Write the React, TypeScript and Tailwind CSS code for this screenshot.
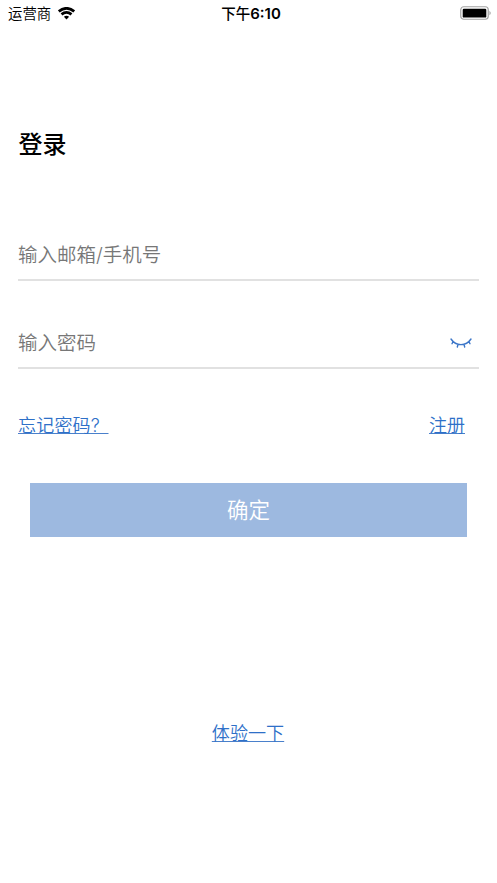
import React from "react";

function StatusBar() {
  return (
    <header className="grid h-[26px] grid-cols-3 items-center pl-2 pr-1.5 text-[14.4px] leading-[26px] text-black">
      <div className="flex items-center gap-[7px]">
        <span className="pt-px font-[350]">运营商</span>
        <svg width="17" height="13" viewBox="0 0 17 13" fill="none" stroke="black" strokeWidth="2.7">
          <path d="M.8 4.4Q8.5-1.8 16.2 4.4" />
          <path d="M3.5 7.4Q8.5 3.2 13.5 7.4" />
          <path d="M5.9 9.7Q8.5 7.6 11.1 9.7L8.5 12.4Z" fill="black" stroke="none" />
        </svg>
      </div>
      <div className="pl-[3px] text-center text-[14.5px] font-medium">下午<span className="text-[15px] font-semibold">6:10</span></div>
      <svg className="relative left-px -top-px justify-self-end" width="32" height="14" viewBox="0 0 32 14">
        <rect x="0.75" y="0.75" width="27.5" height="12.5" rx="3" fill="none" stroke="#a3a3a3" strokeWidth="1.2" />
        <rect x="2.7" y="2.7" width="23.6" height="8.9" rx="1.2" />
        <path d="M29.5 4.7q2.4 2.3 0 4.6Z" fill="#999" />
      </svg>
    </header>
  );
}

export default function App() {
  return (
    <main className="flex h-[883px] w-[497px] flex-col bg-white font-[Inter,'Noto_Sans_CJK_SC',sans-serif]">
      <StatusBar />
      <h1 className="ml-[18.5px] mt-[101px] h-9 text-[24px] font-medium leading-9 text-black">登录</h1>
      <form className="flex flex-col">
        <label className="mx-[18px] mt-[67px] flex h-[51px] items-center border-b-2 border-[#e1e1e1] pt-[3px] text-[19.5px] font-[350] text-[#777]">输入邮箱/手机号</label>
        <label className="mx-[18px] mt-[37px] flex h-[51px] items-center justify-between border-b-2 border-[#e1e1e1] pr-[7px] pt-[3px] text-[19.5px] font-[350] text-[#777]">
          <span>输入密码</span>
          <svg className="mb-[3px]" width="22" height="10" viewBox="0 0 22 10" fill="none" stroke="#3c76c8" strokeWidth="1.4" strokeLinecap="round">
            <path d="M1 1C6 8.5 16 8.5 21 1M3.2 3.4L2 5.7M8 6.4L7.3 9M14 6.4L14.7 9M18.8 3.4L20 5.7" />
          </svg>
        </label>
        <nav className="mt-[42px] flex h-7 items-center justify-between pl-[18px] pr-8 text-[18px] font-[350] text-[#2e70c8] underline decoration-[#4a80cb] decoration-1 underline-offset-[1px] [text-decoration-skip-ink:none]">
          <a className="tracking-[0.2px]">忘记密码<span className="tracking-[1.7px]">?&nbsp;</span></a><a>注册</a>
        </nav>
        <button className="mx-[30px] mt-[44px] h-[54px] bg-[#9db9e0] text-[21.5px] font-[350] text-white">确定</button>
      </form>
      <a className="mt-[182px] self-center pr-px text-[18.1px] font-[350] leading-7 text-[#2e70c8] underline decoration-[#4a80cb] decoration-1 underline-offset-[1px] [text-decoration-skip-ink:none]">体验一下</a>
    </main>
  );
}
